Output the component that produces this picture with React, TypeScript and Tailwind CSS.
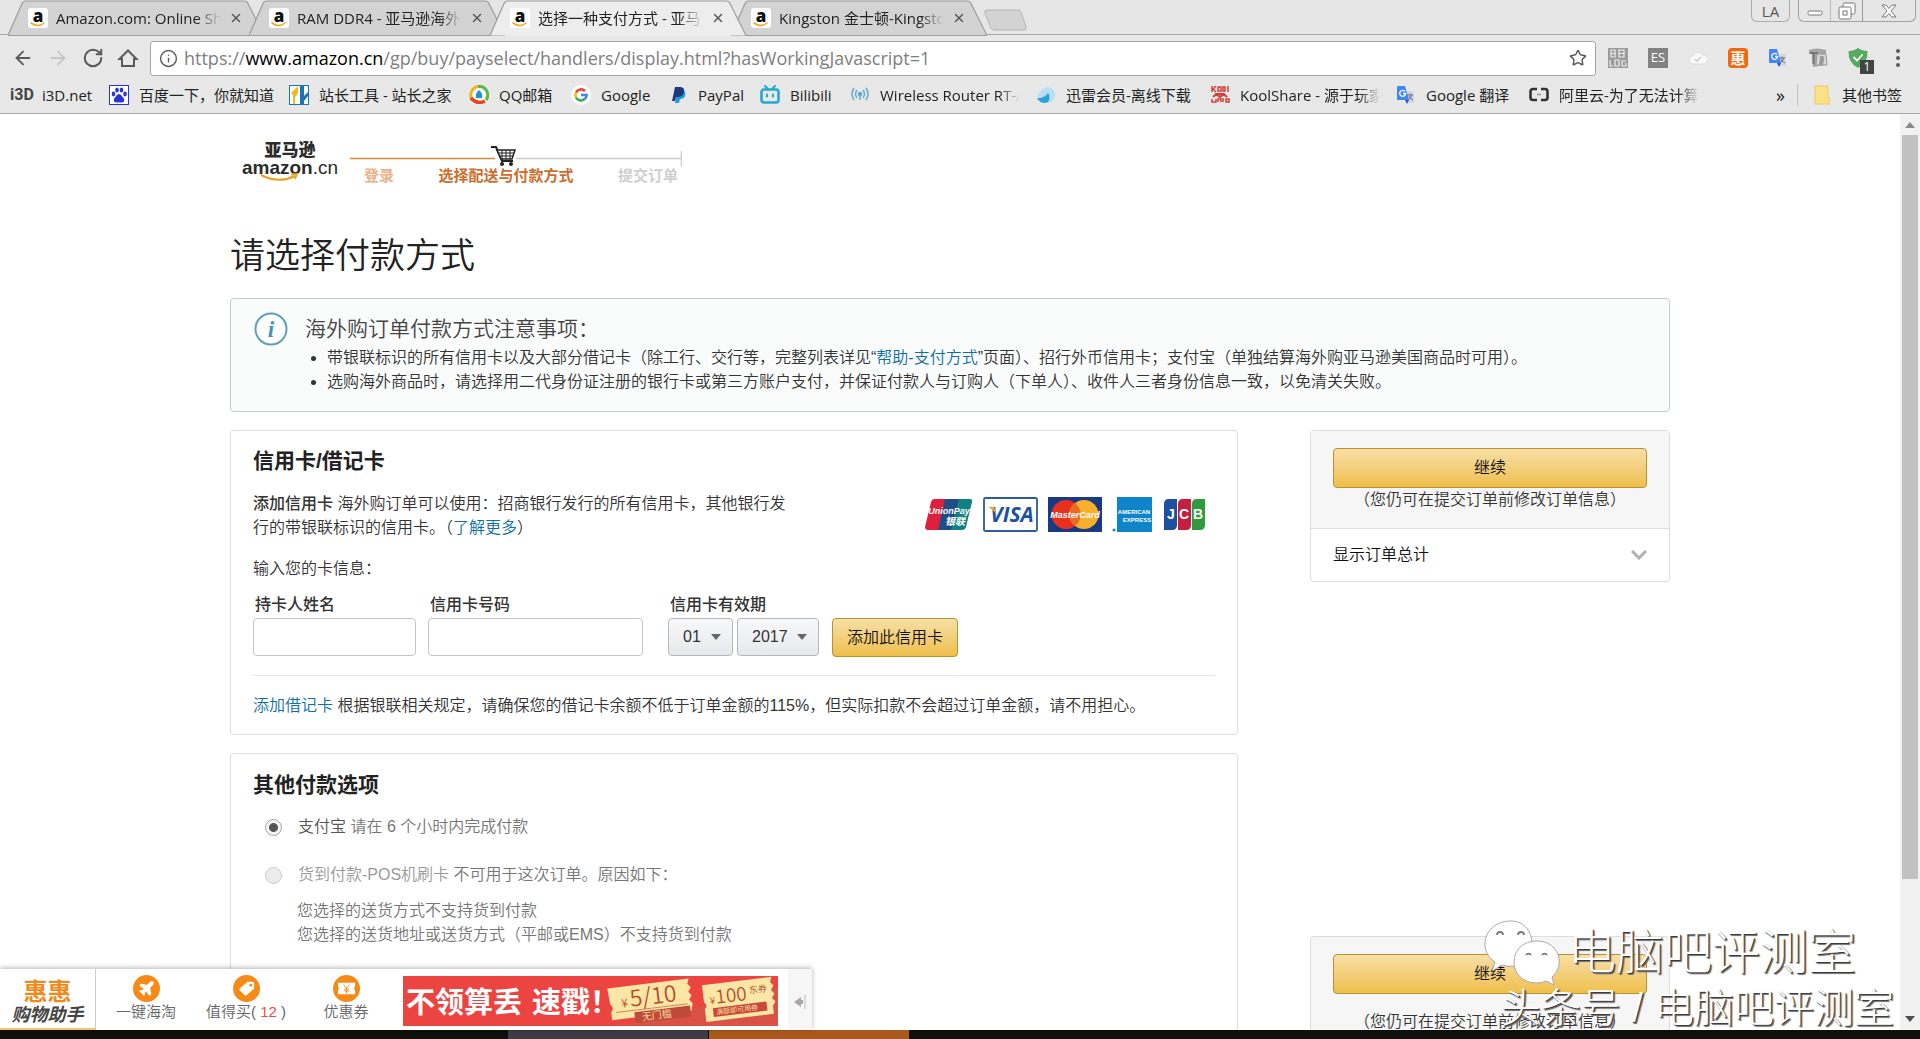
import type { ReactNode } from 'react'
import clsx from 'clsx'
import { ArrowLeft, ArrowRight, Info, Plane, RotateCw, Star, X } from 'lucide-react'

const uiFont = 'font-["Open_Sans","Noto_Sans_CJK_SC",sans-serif]'
const pageFont = 'font-["Liberation_Sans","Noto_Sans_CJK_SC",sans-serif]'

function AmazonIcon() {
  return (
    <svg viewBox="0 0 20 20" className="size-5 shrink-0">
      <rect width="20" height="20" rx="3" fill="#fff" />
      <text x="10" y="13.5" textAnchor="middle" fontSize="17" fontWeight="900" fontFamily="Open Sans" fill="#111">
        a
      </text>
      <path d="M3 15q7 5 13 0" fill="none" stroke="#f5a623" strokeWidth="1.6" strokeLinecap="round" />
    </svg>
  )
}

function TranslateIcon() {
  return (
    <svg viewBox="0 0 20 20" className="size-5 shrink-0">
      <path d="M9 6h8a1 1 0 0 1 1 1v10a1 1 0 0 1-1 1h-5z" fill="#d5d8dc" />
      <path d="M11 10h6M14 8.5V10m2 0q-1 3-4 5m1-4q1 3 4 4" stroke="#5f6b7a" strokeWidth="1" fill="none" />
      <path d="M2 1h7l4 14H2a1 1 0 0 1-1-1V2a1 1 0 0 1 1-1z" fill="#4285f4" />
      <path d="M9 15h4l-2 4z" fill="#2a56c6" />
      <path d="M9 6.4a3 3 0 1 0 .7 2.1H7" stroke="#fff" strokeWidth="1.3" fill="none" />
    </svg>
  )
}

const tabs = [
  { title: 'Amazon.com: Online Shopping', active: false },
  { title: 'RAM DDR4 - 亚马逊海外购', active: false },
  { title: '选择一种支付方式 - 亚马逊', active: true },
  { title: 'Kingston 金士顿-Kingston', active: false }
]

function Tab({ title, active }: { title: string; active: boolean }) {
  return (
    <div className={clsx('relative -mr-[15px] h-9 w-64', active && 'z-10')}>
      <svg viewBox="0 0 256 36" className="absolute inset-0 h-9 w-64">
        <path
          d="M0 35.5L14 3.5Q15 1 18 1H236Q239 1 240 3.5L256 35.5"
          fill={active ? '#ededed' : '#d3d3d3'}
          stroke="#9c9c9c"
          strokeWidth="1.2"
        />
        {!active && <path d="M0 35.5H256" stroke="#9c9c9c" />}
      </svg>
      <div className="relative flex h-9 items-center pl-5">
        <AmazonIcon />
        <span className="ml-2 w-[165px] overflow-hidden text-[15px] whitespace-nowrap text-[#222] [mask-image:linear-gradient(to_right,black_85%,transparent)]">
          {title}
        </span>
        <button aria-label="关闭标签页" className="ml-2 text-[#555]">
          <X size={14} strokeWidth={2.4} />
        </button>
      </div>
    </div>
  )
}

function WindowControls() {
  return (
    <div className="ml-auto flex items-start pr-1 text-[#7a7a7a]">
      <button className="h-[22px] w-[39px] rounded-b-md border border-t-0 border-[#adadad] text-[15px] leading-[22px] text-[#555]">
        LA
      </button>
      <div className="ml-2 flex h-[22px] rounded-b-md border border-t-0 border-[#a2a2a2]">
        <button aria-label="最小化" className="flex w-8 items-center justify-center border-r border-[#bbb]">
          <svg viewBox="0 0 16 6" className="mt-1 w-4">
            <rect x="1" y="1" width="14" height="4" rx="1.5" fill="#fff" stroke="#777" />
          </svg>
        </button>
        <button aria-label="还原" className="flex w-8 items-center justify-center border-r border-[#999]">
          <svg viewBox="0 0 18 18" className="size-[18px]" fill="#fff" stroke="#777">
            <rect x="5" y="1" width="12" height="11" rx="1.5" />
            <rect x="1" y="5" width="12" height="12" rx="1.5" />
            <rect x="5" y="9" width="4" height="4" />
          </svg>
        </button>
        <button aria-label="关闭" className="flex w-[52px] items-center justify-center">
          <svg viewBox="0 0 16 14" className="h-3.5 w-4">
            <path d="M1 1h4l3 3.5L11 1h4l-5 6 5 6h-4L8 9.500 5 13H1l5-6z" fill="#fff" stroke="#777" />
          </svg>
        </button>
      </div>
    </div>
  )
}

function AddressBar() {
  return (
    <div className="flex h-[42px] items-center pt-1 pr-3 pl-3 text-[#5a5a5a]">
      <div className="flex items-center gap-[13px]">
        <button aria-label="后退">
          <ArrowLeft size={22} />
        </button>
        <button aria-label="前进" className="text-[#c6c6c6]">
          <ArrowRight size={22} />
        </button>
        <button aria-label="重新加载">
          <RotateCw size={22} strokeWidth={2.2} />
        </button>
        <button aria-label="主页">
          <svg viewBox="0 0 22 22" className="size-[22px]" fill="none" stroke="currentColor" strokeWidth="2">
            <path d="M2.500 12L11 3.500l8.500 8.500H17v7H5v-7z" />
          </svg>
        </button>
      </div>
      <div className="ml-[11px] flex h-[35px] flex-1 items-center rounded-[3px] border border-[#a5a5a5] bg-white px-2">
        <Info size={19} strokeWidth={1.8} />
        <div className="ml-1.5 flex-1 text-[18px] text-[#808080]">
          https://<span className="text-black">www.amazon.cn</span>
          /gp/buy/payselect/handlers/display.html?hasWorkingJavascript=1
        </div>
        <button aria-label="收藏">
          <Star size={18} strokeWidth={2} />
        </button>
      </div>
      <div className="ml-3 flex items-center gap-5">
        <svg viewBox="0 0 20 20" className="size-5">
          <rect width="20" height="20" fill="#9b9b9b" />
          <g fill="none" stroke="#eee" strokeWidth="1.2">
            <path d="M3 2v7h4V2zM3 5.500h4M11 2v7h5V2zM11 5.500h5" />
            <path d="M2 12v6h3M7 12h4v6H7zM18 13h-4v5h4v-3" />
          </g>
        </svg>
        <span className="flex size-5 items-center justify-center bg-[#828282] text-[13px] text-white">ES</span>
        <svg viewBox="0 0 20 20" className="size-5">
          <path d="M5 16a4 4 0 0 1-.5-8A6 6 0 0 1 15 7a4.500 4.500 0 0 1 1 9z" fill="#f8f8f8" stroke="#dcdcdc" />
          <path d="M7 11l2 2 4-4" fill="none" stroke="#ccc" strokeWidth="1.500" />
        </svg>
        <span className="flex size-5 items-center justify-center rounded bg-[#f2690d] text-[15px] font-bold text-white">惠</span>
        <TranslateIcon />
        <svg viewBox="0 0 20 20" className="size-5">
          <path d="M1 2q8-3 17 0v15l-13 2-1-13H1z" fill="#a5a5a5" />
          <path d="M2 5h8M5.500 5v11" stroke="#777" strokeWidth="2" />
          <path d="M9 6h9l1 11H8z" fill="#d9d9d9" stroke="#999" />
          <path d="M12 8a3 3 0 0 1 4 4l-1 5h-4z" fill="#999" />
        </svg>
        <span className="relative">
          <svg viewBox="0 0 20 20" className="size-5">
            <path d="M10 0q4 3 9.500 3 .5 12-9.500 17Q0 15 .5 3 6 3 10 0z" fill="#56ab5f" />
            <path d="M5.500 9l3.500 3.500 5.500-6" fill="none" stroke="#fff" strokeWidth="1.800" />
          </svg>
          <span className="absolute top-3 left-3 flex h-3.5 w-3.5 items-center justify-center bg-[#444] text-xs text-white">1</span>
        </span>
        <button aria-label="菜单" className="flex w-5 flex-col items-center gap-[3px]">
          <i className="size-1 rounded-full bg-[#5a5a5a]" />
          <i className="size-1 rounded-full bg-[#5a5a5a]" />
          <i className="size-1 rounded-full bg-[#5a5a5a]" />
        </button>
      </div>
    </div>
  )
}

const bookmarks: { label: string; width: string; icon: ReactNode; fade?: boolean }[] = [
  {
    label: 'i3D.net',
    width: 'w-[97px]',
    icon: (
      <svg viewBox="0 0 20 20" className="size-5 shrink-0 overflow-visible">
        <text x="10" y="15" textAnchor="middle" fontSize="16" fontWeight="700" fontFamily="Roboto" fill="#444">
          i3D
        </text>
      </svg>
    )
  },
  {
    label: '百度一下，你就知道',
    width: 'w-[180px]',
    icon: (
      <svg viewBox="0 0 20 20" className="size-5 shrink-0" fill="#2a32d8">
        <rect x=".5" y=".5" width="19" height="19" fill="#fff" stroke="#2a32d8" />
        <ellipse cx="4.500" cy="9" rx="1.800" ry="2.400" />
        <ellipse cx="8" cy="5" rx="1.800" ry="2.500" />
        <ellipse cx="12.500" cy="5" rx="1.800" ry="2.500" />
        <ellipse cx="16" cy="9" rx="1.800" ry="2.400" />
        <path d="M10 9q2 0 3.500 3 2.500 2 1.500 4.500-1.500 1.500-5 .8-3.500.7-5-.8-1-2.500 1.500-4.500Q8 9 10 9z" />
      </svg>
    )
  },
  {
    label: '站长工具 - 站长之家',
    width: 'w-[180px]',
    icon: (
      <svg viewBox="0 0 20 20" className="size-5 shrink-0">
        <rect x=".5" y=".5" width="19" height="19" fill="#fff" stroke="#1b75b5" />
        <path d="M2 8l7-7v5q0 4-3 6v7H4v-9z" fill="#f0b91c" />
        <path d="M11 1h4v10l4-4v4l-4 5v3h-4z" fill="#1b75b5" />
      </svg>
    )
  },
  {
    label: 'QQ邮箱',
    width: 'w-[102px]',
    icon: (
      <svg viewBox="0 0 20 20" className="size-5 shrink-0">
        <circle cx="10" cy="10" r="10" fill="#fff" />
        <path d="M9 1.500A9 9 0 0 0 3 15" fill="none" stroke="#f5b01e" strokeWidth="3" />
        <path d="M9 1.500A8.500 8.500 0 0 1 17 15" fill="none" stroke="#57b947" strokeWidth="3" />
        <path d="M2 13q6 7 14 3" fill="none" stroke="#e5451f" strokeWidth="3.500" />
        <path d="M10 5q4 3 3 8H7q-1-5 3-8z" fill="#2292d8" />
      </svg>
    )
  },
  {
    label: 'Google',
    width: 'w-[101px]',
    icon: (
      <svg viewBox="0 0 20 20" className="size-5 shrink-0" fill="none" strokeWidth="2.600">
        <circle cx="10" cy="10" r="10" fill="#fff" />
        <path d="M14 6A5.600 5.600 0 0 0 5 7.500" stroke="#ea4335" />
        <path d="M5 7.500A5.600 5.600 0 0 0 5 12.500" stroke="#fbbc05" />
        <path d="M5 12.500A5.600 5.600 0 0 0 13.700 14" stroke="#34a853" />
        <path d="M13.700 14A5.600 5.600 0 0 0 15.600 10H10" stroke="#4285f4" />
      </svg>
    )
  },
  {
    label: 'PayPal',
    width: 'w-[88px]',
    icon: (
      <svg viewBox="0 0 16 20" className="h-5 w-4 shrink-0">
        <path d="M5 6h7q2 1 1 5-1 3-5 3l-1 4H3z" fill="#1f9bd8" />
        <path d="M3 2h6q4 1 3 5-1 5-6 5H4l-1 4H0z" fill="#1f3a7c" />
      </svg>
    )
  },
  {
    label: 'Bilibili',
    width: 'w-[90px]',
    icon: (
      <svg viewBox="0 0 20 20" className="size-5 shrink-0" fill="none" stroke="#22a9cf" strokeLinecap="round">
        <path d="M5 1l3 3M15 1l-3 3" strokeWidth="2" />
        <rect x="1.500" y="4.500" width="17" height="13" rx="2.500" strokeWidth="2.600" />
        <path d="M7 9.500v2M13 9.500v2" strokeWidth="2" />
      </svg>
    )
  },
  {
    label: 'Wireless Router RT-AC68U',
    width: 'w-[186px]',
    fade: true,
    icon: (
      <svg viewBox="0 0 20 20" className="size-5 shrink-0" fill="none" stroke="#6aaed0" strokeWidth="1.600">
        <path d="M4 3q-4 6 0 12M7 5q-3 4 0 8M16 3q4 6 0 12M13 5q3 4 0 8" />
        <circle cx="10" cy="9" r="1.500" fill="#3c89b5" />
        <path d="M10 10v5" />
      </svg>
    )
  },
  {
    label: '迅雷会员-离线下载',
    width: 'w-[174px]',
    icon: (
      <svg viewBox="0 0 20 20" className="size-5 shrink-0">
        <path d="M1 13Q3 4 12 2q7 2 7 9-1 6-8 7-8 0-10-5z" fill="#b9dff2" />
        <path d="M1 13q7 1 11-5 3 4 0 9-7 3-11-4z" fill="#2ba2dd" />
      </svg>
    )
  },
  {
    label: 'KoolShare - 源于玩家',
    width: 'w-[186px]',
    fade: true,
    icon: (
      <svg viewBox="0 0 20 20" className="size-5 shrink-0" fill="none" stroke="#d4413a" strokeWidth="1.500">
        <path d="M2 1v6M6 1L3 4l3 3M8 2h3v4H8zM13 2h2v4h-2zM18 1v6" />
        <path d="M3 12q3-4 7 0 4-4 7 0M5 9h10" strokeWidth="2" />
        <path d="M2 14v3h4v-3M8 17v-3h3v3M13 13v4M16 14h3v3h-3z" />
      </svg>
    )
  },
  { label: 'Google 翻译', width: 'w-[133px]', icon: <TranslateIcon /> },
  {
    label: '阿里云-为了无法计算的价值',
    width: 'w-[186px]',
    fade: true,
    icon: (
      <svg viewBox="0 0 20 20" className="size-5 shrink-0" fill="none" stroke="#333" strokeWidth="2.600">
        <path d="M8 4H4Q1.500 4 1.500 6.500v6Q1.500 15 4 15h4M12 4h4q2.500 0 2.500 2.500v6Q18.500 15 16 15h-4" />
        <path d="M8 9.500h4" strokeWidth="1.500" stroke="#999" />
      </svg>
    )
  }
]

function BookmarkBar() {
  return (
    <nav className="flex h-[37px] items-center border-b border-[#a9a9a9] pr-[18px] pl-3 text-[15px] text-[#222]">
      {bookmarks.map(({ label, width, icon, fade }) => (
        <a key={label} href="#" className={clsx('flex shrink-0 items-center gap-2.5', width)}>
          {icon}
          <span
            className={clsx(
              'whitespace-nowrap',
              fade && 'mr-4 overflow-hidden [mask-image:linear-gradient(to_right,black_85%,transparent)]'
            )}
          >
            {label}
          </span>
        </a>
      ))}
      <button aria-label="更多书签" className="ml-auto pr-3 text-lg leading-5">
        »
      </button>
      <a href="#" className="flex items-center gap-3 border-l border-[#c2c2c2] pl-4">
        <svg viewBox="0 0 16 20" className="h-5 w-4">
          <path d="M1 1h13v12l2 1v5H1z" fill="#fbe08a" stroke="#ecc95e" />
        </svg>
        其他书签
      </a>
    </nav>
  )
}

function BrowserChrome() {
  return (
    <header className={clsx('shrink-0 bg-[#e8e8e8]', uiFont)}>
      <div className="flex h-[35px] bg-[#e6e6e6] pl-2 shadow-[inset_0_-1px_0_#a8a8a8]">
        {tabs.map((tab) => (
          <Tab key={tab.title} {...tab} />
        ))}
        <button aria-label="新标签页" className="mt-1 ml-3 self-center">
          <svg viewBox="0 0 44 22" className="h-[22px] w-11">
            <path d="M3 1h31q2 0 3 2l5 15q1 3-2 3H10q-2 0-3-2L1 4q-1-3 2-3z" fill="#d3d3d3" stroke="#b5b5b5" />
          </svg>
        </button>
        <WindowControls />
      </div>
      <AddressBar />
      <BookmarkBar />
    </header>
  )
}

function CheckoutSteps() {
  return (
    <div className="flex pt-7 pl-3">
      <div className="flex w-24 flex-col items-center text-[#2b2b2b]">
        <span className="text-[17px] leading-[17px] font-black">亚马逊</span>
        <span className="text-[19px] leading-[18px]">
          <b>amazon</b>.cn
        </span>
        <svg viewBox="0 0 40 9" className="-mt-1 mr-5 h-[9px] w-10" fill="none" stroke="#f0a020" strokeWidth="2.200">
          <path d="M1 2q17 9 34 1" />
          <path d="M31 1.500l6-.5-2 5" strokeWidth="1.800" />
        </svg>
      </div>
      <div className="ml-3 w-[332px]">
        <svg viewBox="0 0 332 26" className="block h-[26px] w-full">
          <path d="M0 16.500H145" stroke="#dd8a3c" strokeWidth="1.600" />
          <path d="M166 16.500H331M331.500 9v15" stroke="#ccc" strokeWidth="1.600" />
          <path d="M141 5h5l6 14h11" fill="none" stroke="#222" strokeWidth="2" />
          <path d="M147 8h18l-3 9h-11z" fill="#fff" stroke="#222" strokeWidth="1.500" />
          <path d="M148 11h16M150 14h13M152 8v9M156 8v9M160 8v9" stroke="#222" />
          <circle cx="152" cy="22" r="2" fill="#222" />
          <circle cx="161" cy="22" r="2" fill="#222" />
        </svg>
        <ol className="flex justify-between pr-1 pl-[14px] text-[15px] leading-[15px] font-bold">
          <li className="text-[#ecb187]">登录</li>
          <li className="text-[#cb6d2b]">选择配送与付款方式</li>
          <li className="text-[#cfcfcf]">提交订单</li>
        </ol>
      </div>
    </div>
  )
}

function Notice() {
  return (
    <section className="mt-[18px] flex rounded border border-[#c3cdd1] bg-[#fafbfb] px-[23px] pt-[13px] pb-[17px]">
      <svg viewBox="0 0 34 34" className="size-[34px] shrink-0">
        <circle cx="17" cy="17" r="15.500" fill="#fff" stroke="#5f9fb8" strokeWidth="2" />
        <text x="17" y="25" textAnchor="middle" fontSize="23" fontWeight="700" fontStyle="italic" fontFamily="Liberation Serif" fill="#3f97b5">
          i
        </text>
      </svg>
      <div className="ml-[17px]">
        <h4 className="text-[21px] leading-[34px] text-[#444]">海外购订单付款方式注意事项：</h4>
        <ul className="list-disc pl-[22px]">
          <li>
            带银联标识的所有信用卡以及大部分借记卡（除工行、交行等，完整列表详见“
            <a href="#" className="text-[#0f6fa5]">帮助-支付方式</a>
            ”页面）、招行外币信用卡；支付宝（单独结算海外购亚马逊美国商品时可用）。
          </li>
          <li>选购海外商品时，请选择用二代身份证注册的银行卡或第三方账户支付，并保证付款人与订购人（下单人）、收件人三者身份信息一致，以免清关失败。</li>
        </ul>
      </div>
    </section>
  )
}

function GoldButton({ children, className }: { children: ReactNode; className?: string }) {
  return (
    <button
      className={clsx(
        'rounded border border-[#b8922f] bg-linear-to-b from-[#f7dfa5] to-[#efbf48] text-[#111]',
        className
      )}
    >
      {children}
    </button>
  )
}

function CardLogos() {
  return (
    <div className="mt-1 ml-auto flex h-9 items-center pr-2.5">
      <svg viewBox="0 0 48 31" className="mr-2.5 h-[31px] w-12" fontFamily="Liberation Sans" fontWeight="700" fill="#fff">
        <path d="M9 0h12l-7 31H3q-3 0-3-3L6 3q1-3 3-3z" fill="#e01f3c" />
        <path d="M20 0h15l-7 31H13z" fill="#1d4f86" />
        <path d="M34 0h11q3 0 2 3l-6 25q-1 3-4 3H26z" fill="#128280" />
        <text x="24" y="15" textAnchor="middle" fontSize="9" fontStyle="italic">UnionPay</text>
        <text x="30" y="26" textAnchor="middle" fontSize="10" fontStyle="italic" fontFamily="Noto Sans CJK SC">银联</text>
      </svg>
      <svg viewBox="0 0 55 35" className="mr-2.5 h-[35px] w-[55px]">
        <rect x="1" y="1" width="53" height="33" rx="1.500" fill="#fff" stroke="#2a5d9f" strokeWidth="1.800" />
        <text x="29" y="25" textAnchor="middle" fontSize="21" fontWeight="700" fontStyle="italic" fontFamily="Open Sans" fill="#1b539e">
          VISA
        </text>
        <path d="M5 10h6l3 8q-3-5-9-8z" fill="#f2a62b" />
      </svg>
      <svg viewBox="0 0 54 35" className="mr-2.5 h-[35px] w-[54px]">
        <rect width="54" height="35" fill="#173a82" />
        <circle cx="18" cy="17.500" r="14.500" fill="#e8301f" />
        <circle cx="36" cy="17.500" r="14.500" fill="#f8b02c" />
        <path d="M27 6a14.500 14.500 0 0 0 0 23a14.500 14.500 0 0 0 0-23z" fill="#ec6b23" />
        <text x="27" y="21" textAnchor="middle" fontSize="9" fontWeight="700" fontStyle="italic" fontFamily="Liberation Sans" fill="#fff">
          MasterCard
        </text>
      </svg>
      <svg viewBox="0 0 40 35" className="mr-3 h-[35px] w-10" fontFamily="Liberation Sans" fontWeight="700" fill="#fff">
        <rect x="5" width="35" height="35" fill="#0e85cb" />
        <circle cx="2" cy="33" r="1.500" fill="#0e85cb" />
        <text x="22" y="17" textAnchor="middle" fontSize="6">AMERICAN</text>
        <text x="25" y="25" textAnchor="middle" fontSize="6">EXPRESS</text>
      </svg>
      <svg viewBox="0 0 41 31" className="h-[31px] w-[41px]" fontFamily="Liberation Sans" fontWeight="700" fill="#fff">
        <path d="M5 0h8v26q0 5-5 5H0V5q0-5 5-5z" fill="#1d509f" />
        <path d="M19 0h8v26q0 5-5 5h-8V5q0-5 5-5z" fill="#c41f3e" />
        <path d="M33 0h8v26q0 5-5 5h-8V5q0-5 5-5z" fill="#2f9b3e" />
        <text x="7" y="20" textAnchor="middle" fontSize="14">J</text>
        <text x="20" y="20" textAnchor="middle" fontSize="14">C</text>
        <text x="34" y="20" textAnchor="middle" fontSize="14">B</text>
      </svg>
    </div>
  )
}

function Dropdown({ id, label, value, className }: { id: string; label: string; value: string; className: string }) {
  return (
    <div className={clsx('relative', className)}>
      <select
        id={id}
        aria-label={label}
        defaultValue={value}
        className="block h-[38px] w-full appearance-none rounded border border-[#b4b7bc] bg-linear-to-b from-[#f7f8fa] to-[#e7e9ec] pl-3.5"
      >
        <option>{value}</option>
      </select>
      <svg viewBox="0 0 10 6" className="pointer-events-none absolute top-4 right-3 h-1.5 w-2.5">
        <path d="M0 0h10L5 6z" fill="#666" />
      </svg>
    </div>
  )
}

function CreditCardPanel() {
  const input = 'block h-[38px] w-full rounded border border-[#c4c4c4] bg-white px-2'
  return (
    <section className="rounded border border-[#ddd] px-[22px] pt-[14px] pb-4">
      <h3 className="text-[21px] leading-8 font-bold text-[#222]">信用卡/借记卡</h3>
      <div className="mt-[15px] flex">
        <p className="w-[544px]">
          <b className="font-medium">添加信用卡</b> 海外购订单可以使用：招商银行发行的所有信用卡，其他银行发行的带银联标识的信用卡。（
          <a href="#" className="text-[#0f6fa5]">了解更多</a>）
        </p>
        <CardLogos />
      </div>
      <p className="mt-[17px]">输入您的卡信息：</p>
      <form className="mt-[10px] flex items-start" onSubmit={(e) => e.preventDefault()}>
        <div className="w-[163px]">
          <label htmlFor="holder" className="block pl-0.5 leading-[27px] font-medium">持卡人姓名</label>
          <input id="holder" type="text" className={input} />
        </div>
        <div className="ml-3 w-[215px]">
          <label htmlFor="number" className="block pl-0.5 leading-[27px] font-medium">信用卡号码</label>
          <input id="number" type="text" className={input} />
        </div>
        <div className="ml-[25px]">
          <label htmlFor="month" className="block pl-0.5 leading-[27px] font-medium">信用卡有效期</label>
          <div className="flex gap-1">
            <Dropdown id="month" label="月" value="01" className="w-[65px]" />
            <Dropdown id="year" label="年" value="2017" className="w-[82px]" />
          </div>
        </div>
        <GoldButton className="mt-[27px] ml-[13px] h-[39px] w-[126px]">添加此信用卡</GoldButton>
      </form>
      <hr className="mt-[18px] border-[#e5e5e5]" />
      <p className="mt-[18px]">
        <a href="#" className="text-[#0f6fa5]">添加借记卡</a> 根据银联相关规定，请确保您的借记卡余额不低于订单金额的115%，但实际扣款不会超过订单金额，请不用担心。
      </p>
    </section>
  )
}

function OtherPanel() {
  const radio =
    'mr-4 ml-3 size-[17px] appearance-none rounded-full border bg-[#f4f4f4] border-[#a5a5a5] checked:bg-[radial-gradient(#555_38%,#f4f4f4_46%)] disabled:border-[#ccc] disabled:bg-[#ececec]'
  return (
    <section className="mt-[18px] h-80 rounded border border-[#ddd] px-[22px] pt-[15px] text-[#767676]">
      <h3 className="text-[21px] leading-8 font-bold text-[#222]">其他付款选项</h3>
      <label className="mt-3.5 flex items-center">
        <input type="radio" name="other" defaultChecked className={radio} />
        <span>
          <span className="text-[#555]">支付宝</span> 请在 6 个小时内完成付款
        </span>
      </label>
      <label className="mt-6 flex items-center">
        <input type="radio" name="other" disabled className={radio} />
        <span>
          <span className="text-[#999]">货到付款-POS机刷卡</span> 不可用于这次订单。原因如下：
        </span>
      </label>
      <p className="mt-3 pl-11">
        您选择的送货方式不支持货到付款
        <br />
        您选择的送货地址或送货方式（平邮或EMS）不支持货到付款
      </p>
    </section>
  )
}

function Sidebar() {
  return (
    <aside className="w-[360px] shrink-0">
      <section className="rounded border border-[#ddd]">
        <div className="border-b border-[#ddd] bg-[#f6f6f6] px-[22px] pt-[17px] pb-4 text-center">
          <GoldButton className="block h-10 w-full">继续</GoldButton>
          <p>（您仍可在提交订单前修改订单信息）</p>
        </div>
        <button className="flex w-full items-center justify-between px-[22px] py-3.5 text-left text-[#111]">
          显示订单总计
          <svg viewBox="0 0 16 10" className="w-4" fill="none" stroke="#b0b0b0" strokeWidth="3">
            <path d="M1 1l7 7 7-7" />
          </svg>
        </button>
      </section>
      <section className="mt-[354px] h-40 rounded border border-[#ddd] bg-[#f6f6f6] px-[22px] pt-[17px] text-center">
        <GoldButton className="block h-10 w-full">继续</GoldButton>
        <p className="mt-4">（您仍可在提交订单前修改订单信息）</p>
      </section>
    </aside>
  )
}

function Scrollbar() {
  return (
    <div className="flex w-5 shrink-0 flex-col items-center bg-[#f1f1f1] py-2">
      <svg viewBox="0 0 10 6" className="w-2.5">
        <path d="M0 6h10L5 0z" fill="#8a8a8a" />
      </svg>
      <div className="mt-[7px] h-[744px] w-4 bg-[#c1c1c1]" />
      <svg viewBox="0 0 10 6" className="mt-auto w-2.5">
        <path d="M0 0h10L5 6z" fill="#505050" />
      </svg>
    </div>
  )
}

function HelperItem({ label, children }: { label: ReactNode; children: ReactNode }) {
  return (
    <a href="#" className="flex w-[100px] flex-col items-center text-[15px] leading-[19px] whitespace-nowrap text-[#666]">
      <span className="flex size-[27px] items-center justify-center rounded-full bg-[#f78a17] text-white">{children}</span>
      {label}
    </a>
  )
}

function ShoppingHelper() {
  return (
    <div className="absolute bottom-0 left-0 flex h-[61px] bg-white font-[350] shadow-[0_-1px_5px_rgba(0,0,0,0.3)]">
      <div className="flex w-24 flex-col items-center border-r border-b-2 border-r-[#ccc] border-b-[#f3c46a] pt-2.5">
        <span className="text-2xl leading-[26px] font-bold text-[#f08a1d]">惠惠</span>
        <span className="text-[18px] leading-[20px] font-bold text-[#444] italic">购物助手</span>
      </div>
      <div className="flex pt-1.5">
        <HelperItem label="一键海淘">
          <Plane size={17} fill="currentColor" />
        </HelperItem>
        <HelperItem
          label={
            <span>
              值得买( <span className="text-[#e8503a]">12</span> )
            </span>
          }
        >
          <svg viewBox="0 0 20 20" className="size-[19px]">
            <path d="M3 10l8-7h5q2 0 2 2v5l-8 7q-1 1-2 0l-5-5q-1-1 0-2z" fill="#fff" />
            <circle cx="14.500" cy="6.500" r="1.500" fill="#f78a17" />
          </svg>
        </HelperItem>
        <HelperItem label="优惠券">
          <svg viewBox="0 0 20 20" className="size-[19px]">
            <path d="M1 4h18v4q-2 2 0 4v4H1v-4q2-2 0-4z" fill="#fff" />
            <path d="M7 6l3 4 3-4M10 10v5M7.500 10.500h5M7.500 12.500h5" stroke="#f78a17" fill="none" />
          </svg>
        </HelperItem>
      </div>
      <a href="#" className="mt-[7px] ml-[7px] h-[50px] w-[375px]">
        <svg viewBox="0 0 375 50" className="h-[50px] w-[375px]" fontFamily="Noto Sans CJK SC">
          <rect width="375" height="50" fill="#ec4541" />
          <path d="M215 50L375 12v38z" fill="#cf5a4a" opacity=".6" />
          <text x="3" y="37" fontSize="29" fontWeight="700" fill="#fff">不领算丢</text>
          <text x="129" y="37" fontSize="29" fontWeight="700" fill="#fff">速戳！</text>
          <g transform="rotate(-7 250 24)">
            <path d="M206 7h82l-2 5 3 4-3 4 3 4-3 4 3 4-2 7h-80v-8q4-3 0-8z" fill="#fbe6a6" />
            <path d="M212 32h72" stroke="#c98b5c" />
            <text x="218" y="28" fontSize="12" fill="#b5502f">¥</text>
            <text x="227" y="28" fontSize="23" fill="#b5502f">5/10</text>
            <rect x="230" y="34" width="56" height="11" fill="#c04a3a" />
            <text x="237" y="43" fontSize="10" fill="#fbe6a6">无门槛</text>
          </g>
          <g transform="rotate(-7 335 24)">
            <path d="M301 5h70l-2 5 3 4-3 4 3 4-3 4 3 4-3 4v8h-68v-13q4-3 0-7z" fill="#fbe6a6" />
            <text x="307" y="25" fontSize="10" fill="#b5502f">¥</text>
            <text x="313" y="25" fontSize="19" fill="#b5502f">100</text>
            <text x="347" y="19" fontSize="9" fill="#b5502f">东券</text>
            <rect x="309" y="29" width="54" height="9" fill="#c9483a" />
            <text x="312" y="36" fontSize="7" fill="#fbe6a6">满额即可用券</text>
          </g>
        </svg>
      </a>
      <button aria-label="收起" className="ml-2.5 flex w-6 items-center justify-center bg-[#f6f6f6]">
        <svg viewBox="0 0 12 16" className="mt-1 w-3">
          <path d="M0 8l7-5v3h2v4H7v3z" fill="#a8a8a8" />
          <path d="M11 1v14" stroke="#bbb" />
        </svg>
      </button>
    </div>
  )
}

function Watermark() {
  return (
    <div className="pointer-events-none absolute right-[26px] bottom-0 flex flex-col items-end font-light text-white [text-shadow:1px_1px_1px_#333,2px_2px_1px_#777]">
      <div className="mr-[38px] flex items-center">
        <svg viewBox="0 0 78 66" className="mr-1.5 h-[66px] w-[78px]" fill="#fff" stroke="#aaa">
          <path d="M27 1C12 1 1 11 1 24c0 8 4 14 10 18l-3 9 10-6q6 2 12 1C54 46 55 1 27 1z" />
          <path d="M53 21c-14 0-23 9-23 21s9 21 23 21q5 0 9-2l8 4-2-8c14-12 7-36-15-36z" />
          <g fill="none" stroke="#777" strokeWidth="1.800">
            <path d="M13 15a3 3 0 0 1 6 0M34 15a3 3 0 0 1 6 0M42 35a3 3 0 0 1 5 0M58 35a3 3 0 0 1 5 0" />
          </g>
        </svg>
        <span className="text-[48px] leading-[52px]">电脑吧评测室</span>
      </div>
      <span className="text-[40px] leading-[44px]">头条号 / 电脑吧评测室</span>
    </div>
  )
}

export default function App() {
  return (
    <div className="flex h-screen flex-col overflow-hidden bg-white">
      <BrowserChrome />
      <div className={clsx('relative flex min-h-0 flex-1', pageFont)}>
        <main className="min-w-0 flex-1 overflow-hidden px-[230px] text-base leading-6 font-[350] text-[#333]">
          <CheckoutSteps />
          <h1 className="mt-[49px] text-[35px] leading-[48px] text-[#222]">请选择付款方式</h1>
          <Notice />
          <div className="mt-[18px] flex gap-[72px]">
            <div className="min-w-0 flex-1">
              <CreditCardPanel />
              <OtherPanel />
            </div>
            <Sidebar />
          </div>
        </main>
        <Scrollbar />
        <ShoppingHelper />
        <Watermark />
      </div>
      <footer className="flex h-[9px] shrink-0 bg-[#0f0f0d]">
        <div className="ml-[508px] w-[200px] bg-[#3e3c40]" />
        <div className="ml-px w-[200px] bg-[#a9591b]" />
      </footer>
    </div>
  )
}
